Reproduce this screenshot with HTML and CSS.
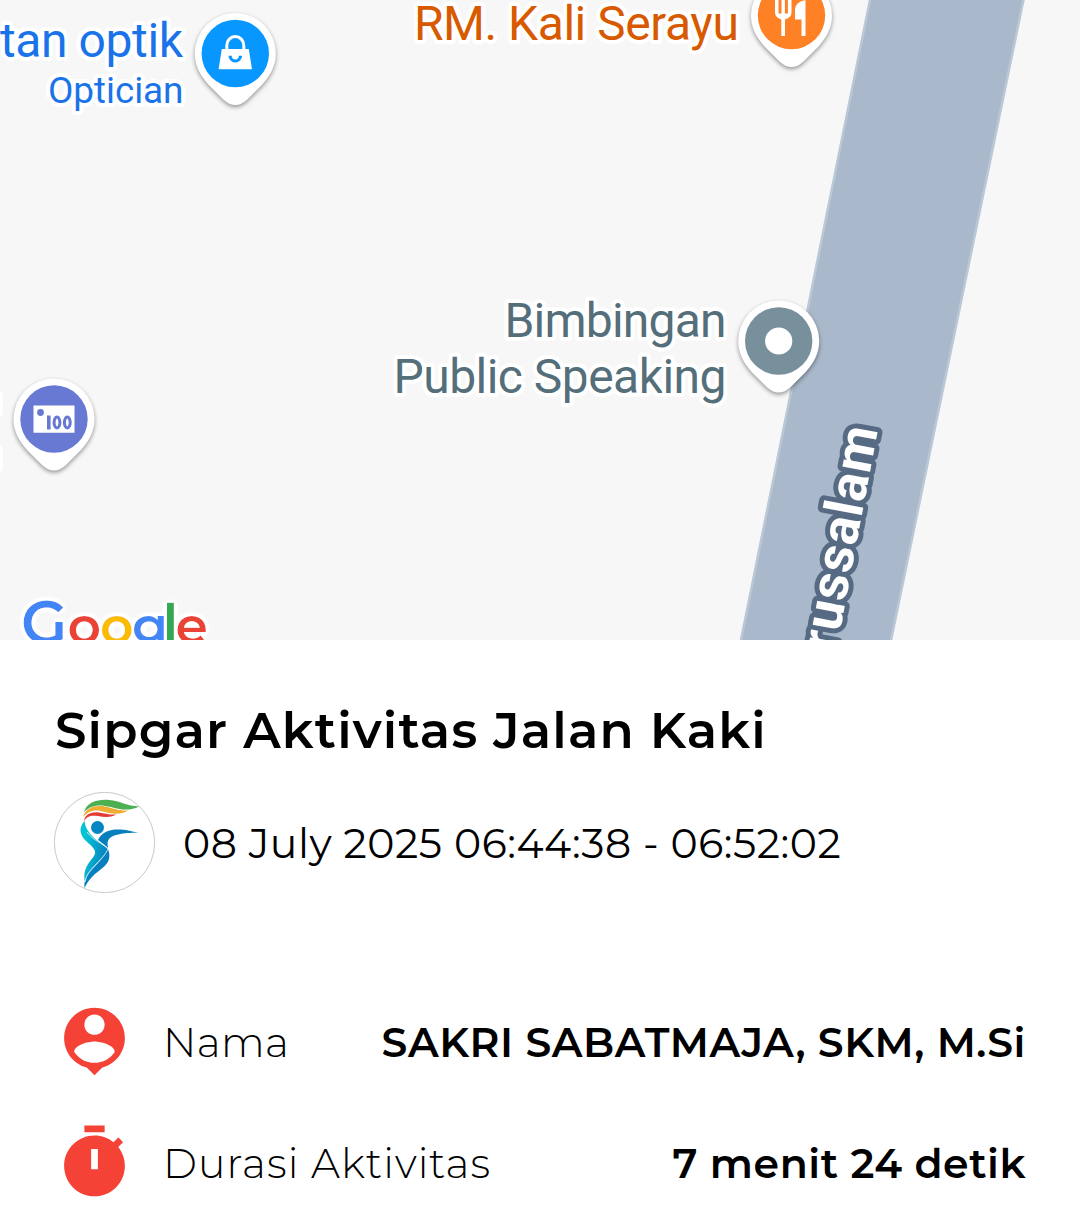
FILE: index.html
```html
<!DOCTYPE html>
<html lang="id">
<head>
<meta charset="utf-8">
<title>Sipgar Aktivitas Jalan Kaki</title>
<link rel="stylesheet" href="styles.css">
</head>
<body>
<main class="screen">
  <svg class="map" viewBox="0 0 1080 640" width="1080" height="640">
    <defs>
      <path id="pin" d="M-40.5 0A40.5 40.5 0 1 1 40.5 0C40.5 12 35 22 27 31L12 46Q0 57-12 46L-27 31C-35 22-40.5 12-40.5 0Z"/>
      <filter id="outline" x="-10%" y="-30%" width="120%" height="160%">
        <feGaussianBlur in="SourceAlpha" stdDeviation="3"/>
        <feComponentTransfer result="spread"><feFuncA type="linear" slope="10" intercept="-0.6"/></feComponentTransfer>
        <feFlood flood-color="#fff"/>
        <feComposite in2="spread" operator="in" result="halo"/>
        <feMerge><feMergeNode in="halo"/><feMergeNode in="SourceGraphic"/></feMerge>
      </filter>
    </defs>
    <path class="road" d="M872 -10L739 650H889L1025.500 -10Z"/>
    <g class="road-label" transform="translate(878 429.500) rotate(-79.300)">
      <text x="-227" y="0" textLength="227">russalam</text>
    </g>

    <g class="place blue">
      <text x="0" y="56.500" textLength="183">tan optik</text>
      <text class="small" x="48" y="103" textLength="135.500">Optician</text>
    </g>
    <text class="place orange" x="414" y="39.500" textLength="325">RM. Kali Serayu</text>
    <g class="place slate">
      <text x="504.500" y="336.500" textLength="222">Bimbingan</text>
      <text x="393.500" y="392.500" textLength="333">Public Speaking</text>
    </g>
    <path class="halo" d="M0 390q3 2 3 8v12q0 6-3 8zM0 445q3 2 3 8v12q0 6-3 8z"/>

    <g transform="translate(235.300 53.500)">
      <use href="#pin" class="pin"/>
      <circle r="33.700" fill="#0896ff"/>
      <path d="M-13.500-4.500H13.500L16.700 15.700H-16.700Z" fill="#fff"/>
      <path d="M-8.500-4V-8a8.500 9 0 0 1 17 0V-4" fill="none" stroke="#fff" stroke-width="3"/>
      <path d="M-5.200 2.300a5.200 5.200 0 0 0 10.400 0" fill="none" stroke="#0896ff" stroke-width="3.200"/>
    </g>
    <g transform="translate(791.500 15.500)">
      <use href="#pin" class="pin"/>
      <circle r="33.700" fill="#ff8126"/>
      <path d="M-16.500-18h3.500V-2h3V-18h3.400V-2h3V-18H0V-3Q0 2-6.500 4V20.500h-3.700V4Q-16.500 2-16.500-3ZM14-15.500V20.500H10V4H3.500V-6Q4-14 14-15.500Z" fill="#fff"/>
    </g>
    <g transform="translate(778.700 341)">
      <use href="#pin" class="pin"/>
      <circle r="33.700" fill="#78909c"/>
      <circle r="13.600" fill="#fff"/>
    </g>
    <g transform="translate(54 419)">
      <use href="#pin" class="pin"/>
      <circle r="33.700" fill="#6879d3"/>
      <path d="M-20.500-13.500H20.500V13.700H-20.500Z" fill="#fff"/>
      <circle cx="-13.500" cy="-6.500" r="3.400" fill="#6879d3"/>
      <path d="M-7-3.500h3.600V10.500H-7Z" fill="#6879d3"/>
      <ellipse cx="3" cy="3.500" rx="2.900" ry="5.500" fill="none" stroke="#6879d3" stroke-width="3"/>
      <ellipse cx="13.300" cy="3.500" rx="2.900" ry="5.500" fill="none" stroke="#6879d3" stroke-width="3"/>
    </g>

    <text class="google" y="644" filter="url(#outline)"><tspan class="cap" x="21" fill="#4285f4">G</tspan><tspan x="67.500" fill="#ea4335">o</tspan><tspan x="100" fill="#fbbc05">o</tspan><tspan x="132" fill="#4285f4">g</tspan><tspan class="stem" x="162.500" fill="#34a853">l</tspan><tspan x="175.500" fill="#ea4335">e</tspan></text>
  </svg>

  <section class="details">
    <h1 class="title">Sipgar Aktivitas Jalan Kaki</h1>
    <div class="when">
      <svg class="logo" viewBox="0 0 101 101" width="101" height="101">
        <defs>
          <linearGradient id="body" x1="0" x2="1" y1="0" y2="0.300"><stop offset=".25" stop-color="#06c3d4"/><stop offset="1" stop-color="#0782bf"/></linearGradient>
        </defs>
        <circle cx="50.500" cy="50.500" r="50.200" fill="#fff" stroke="#a5a5a5" stroke-width=".6"/>
        <path d="M30 20C33 10 44 7 55 8C66 9 73 14 85 14.500C77 19 66 18 57 15C45 12 37 13 30 20Z" fill="#4caf50"/>
        <path d="M29 25C32 15 42 13 51 14.500C59 16 65 19 74 18.500C67 23 58 22 51 20C42 17 35 18 29 25Z" fill="#efad31"/>
        <path d="M30 29C31 22 38 19.500 45 20.500C51 21.500 56 23 62 22.500C56 26 50 25 44 24C37 23 33 24 30 29Z" fill="#e33b35"/>
        <circle cx="43.500" cy="35.500" r="6.500" fill="#0585c2"/>
        <path d="M30.500 29C25 35 25 42 32 49C37 54 44 58 40 64C35 71 29 76 30.500 89C35 77 50 67 54 57C46 50 32 43 30.500 29Z" fill="url(#body)"/>
        <path d="M44 48C48 39 57 37 67 37.500C74 38 79 40 85 40.500C74 41 57 41 54 49C53 52 54 54 54 56C51 53 47 50 44 48Z" fill="#087fbd"/>
        <path d="M54 57C58 67 53 73 46 78C38 84 34 89 30.500 96C29 80 46 74 54 57Z" fill="#087fbd"/>
        <path d="M33 40C39 49 49 51 54 57C48 70 33 76 31 90" fill="none" stroke="#d7f3fa" stroke-width=".8"/>
      </svg>
      <span class="date">08 July 2025 06:44:38 - 06:52:02</span>
    </div>
    <dl class="facts">
      <div class="fact">
        <svg class="icon" viewBox="0 0 24 24"><path d="M12 2c-4.970 0-9 4.030-9 9 0 4.170 2.840 7.670 6.690 8.690L12 22l2.310-2.310C18.160 18.670 21 15.170 21 11c0-4.970-4.030-9-9-9zm0 2c1.660 0 3 1.340 3 3s-1.340 3-3 3-3-1.340-3-3 1.340-3 3-3zm0 14.300c-2.500 0-4.710-1.280-6-3.220.030-1.990 4-3.080 6-3.080 1.990 0 5.970 1.090 6 3.080-1.290 1.940-3.500 3.220-6 3.220z"/></svg>
        <dt class="label short">Nama</dt>
        <dd class="value">SAKRI SABATMAJA, SKM, M.Si</dd>
      </div>
      <div class="fact">
        <svg class="icon" viewBox="0 0 24 24"><path d="M15 1H9v2h6V1zm-4 13h2V8h-2v6zm8.030-6.610l1.420-1.420c-.430-.510-.900-.990-1.410-1.410l-1.420 1.420C16.070 4.740 14.120 4 12 4c-4.970 0-9 4.030-9 9s4.020 9 9 9 9-4.030 9-9c0-2.120-.740-4.070-1.970-5.610z"/></svg>
        <dt class="label">Durasi Aktivitas</dt>
        <dd class="value">7 menit 24 detik</dd>
      </div>
    </dl>
  </section>
</main>
</body>
</html>
```
FILE: styles.css
```css
* { box-sizing: border-box; margin: 0; padding: 0; }
body { background: #fff; color: #000; font-family: Montserrat, Inter, sans-serif; }
.screen { width: 1080px; height: 1218px; overflow: hidden; display: flex; flex-direction: column; }

.map { display: block; flex: none; background: #f7f7f7; overflow: hidden; font-family: Roboto, sans-serif; }
.road { fill: #a9b8ca; stroke: #bac7d6; stroke-width: 2.5; }
.road-label text { font-size: 53px; font-weight: 700; fill: #fff; stroke: #566a83; stroke-width: 10; stroke-linejoin: round; paint-order: stroke; }
.place { font-size: 48px; stroke: #fff; stroke-width: 8; stroke-linejoin: round; paint-order: stroke; }
.small { font-size: 37px; }
.blue { fill: #1a73e8; }
.orange { fill: #d75a00; }
.slate { fill: #546e7a; }
.halo { fill: #fff; }
.pin { fill: #fff; filter: drop-shadow(0 2px 2px rgba(0, 0, 0, .4)); }
.google { font-family: Montserrat, Lato, sans-serif; font-size: 52px; font-weight: 600; }
.google .cap { font-size: 60px; }
.google .stem { font-size: 55px; }

.details { flex: 1; padding: 61px 54px 0; }
.title { height: 60px; line-height: 60px; padding-left: 1px; font-size: 50px; font-weight: 600; white-space: nowrap; letter-spacing: 1.17px; }
.when { display: flex; align-items: center; gap: 28px; margin-top: 31px; height: 101px; }
.logo { flex: none; }
.date { padding-top: 1px; font-size: 41px; font-weight: 400; white-space: nowrap; letter-spacing: .57px; }
.facts { margin-top: 88px; padding-top: 20px; display: flex; flex-direction: column; gap: 40px; }
.fact { display: flex; align-items: center; height: 81px; }
.icon { flex: none; width: 81px; height: 81px; fill: #f44336; fill-rule: evenodd; }
.label { margin-left: 28px; font-size: 41px; font-weight: 300; letter-spacing: 1.05px; white-space: nowrap; }
.short { letter-spacing: .4px; }
.value { margin-left: auto; font-size: 41px; font-weight: 600; letter-spacing: .53px; white-space: nowrap; }
```
